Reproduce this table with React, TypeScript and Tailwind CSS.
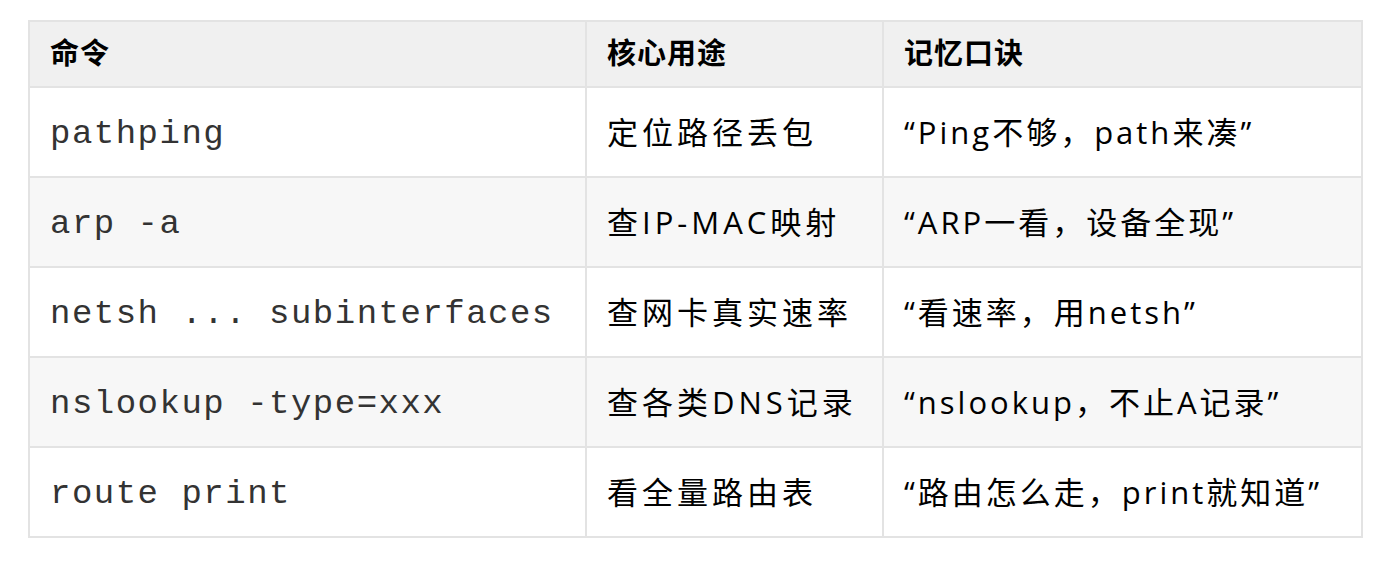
import React from "react";

const rows = [
  ["pathping", "定位路径丢包", "“Ping不够，path来凑”"],
  ["arp -a", "查IP-MAC映射", "“ARP一看，设备全现”"],
  ["netsh ... subinterfaces", "查网卡真实速率", "“看速率，用netsh”"],
  ["nslookup -type=xxx", "查各类DNS记录", "“nslookup，不止A记录”"],
  ["route print", "看全量路由表", "“路由怎么走，print就知道”"],
];

const sans = "font-['Open_Sans','Noto_Sans_CJK_SC',sans-serif]";

export default function App() {
  return (
    <div className="w-[1382px] h-[564px] bg-white pt-[20px] pl-[28px]">
      <table className="border-collapse table-fixed w-[1333px] text-black">
        <colgroup>
          <col className="w-[557px]" />
          <col className="w-[297px]" />
          <col className="w-[479px]" />
        </colgroup>
        <thead>
          <tr className="h-[66px] bg-[#f0f0f0]">
            {["命令", "核心用途", "记忆口诀"].map((h) => (
              <th
                key={h}
                className={`border-2 border-[#e3e3e3] text-left font-bold px-[20px] pb-[3px] text-[29px] tracking-[1px] ${sans}`}
              >
                {h}
              </th>
            ))}
          </tr>
        </thead>
        <tbody>
          {rows.map((r, i) => (
            <tr key={i} className={`h-[90px] ${i % 2 === 1 ? "bg-[#f7f7f7]" : "bg-white"}`}>
              <td className="border-2 border-[#e3e3e3] px-[20px] pt-[4px] font-['Liberation_Mono',monospace] text-[34px] tracking-[1.5px] text-[#333]">
                {r[0]}
              </td>
              <td className={`border-2 border-[#e3e3e3] px-[20px] text-[31px] tracking-[4px] whitespace-nowrap ${sans}`}>
                {r[1]}
              </td>
              <td className={`border-2 border-[#e3e3e3] px-[20px] text-[31px] tracking-[3px] whitespace-nowrap ${sans}`}>
                {r[2]}
              </td>
            </tr>
          ))}
        </tbody>
      </table>
    </div>
  );
}
